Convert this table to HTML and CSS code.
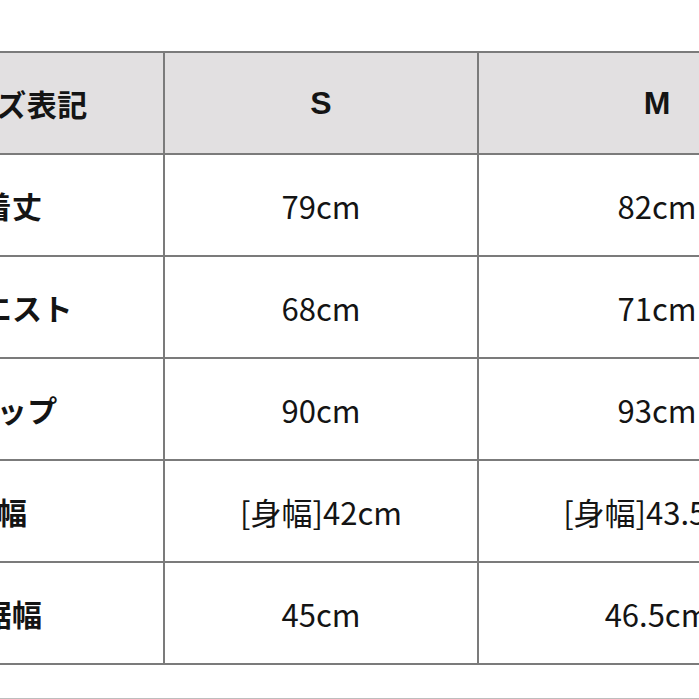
FILE: index.html
```html
<!DOCTYPE html>
<html lang="ja">
<head>
<meta charset="utf-8">
<link rel="stylesheet" href="styles.css">
</head>
<body>
<div class="page">
  <table class="size-table">
    <colgroup>
      <col class="col-label">
      <col class="col-s">
      <col class="col-m">
    </colgroup>
    <thead>
      <tr>
        <th class="label">サイズ表記</th>
        <th class="size">S</th>
        <th class="size">M</th>
      </tr>
    </thead>
    <tbody>
      <tr>
        <th class="label">着丈</th>
        <td>79cm</td>
        <td>82cm</td>
      </tr>
      <tr>
        <th class="label">ウエスト</th>
        <td>68cm</td>
        <td>71cm</td>
      </tr>
      <tr>
        <th class="label">ヒップ</th>
        <td>90cm</td>
        <td>93cm</td>
      </tr>
      <tr>
        <th class="label label-shift">身幅</th>
        <td>[身幅]42cm</td>
        <td>[身幅]43.5cm</td>
      </tr>
      <tr>
        <th class="label">裾幅</th>
        <td>45cm</td>
        <td>46.5cm</td>
      </tr>
    </tbody>
  </table>
  <div class="rule"></div>
</div>
</body>
</html>
```

FILE: styles.css
```css
html, body {
  margin: 0;
  padding: 0;
  background: #ffffff;
}

.page {
  width: 699px;
  height: 699px;
  overflow: hidden;
  background: #ffffff;
  padding-top: 51px;
  box-sizing: border-box;
}

.size-table {
  border-collapse: collapse;
  table-layout: fixed;
  width: 976px;
  margin-left: -141px;
  font-family: "Noto Sans CJK JP", "Noto Sans", sans-serif;
  color: #141414;
}

.col-label { width: 304px; }
.col-s { width: 314px; }
.col-m { width: 358px; }

.size-table th,
.size-table td {
  border: 2px solid #7b7b7b;
  height: 102px;
  padding: 0;
  text-align: center;
  vertical-align: middle;
  box-sizing: border-box;
}

.size-table thead th {
  background: #e2e0e1;
}

.size-table .label {
  font-weight: 700;
  font-size: 30px;
  letter-spacing: 0.5px;
}

.size-table .label-shift {
  padding-right: 30px;
}

.size-table .size {
  font-family: "Liberation Sans", Arial, sans-serif;
  font-weight: 700;
  font-size: 32px;
}

.size-table td {
  font-size: 31px;
  font-weight: 400;
}

.size-table tbody th {
  background: #ffffff;
}

.rule {
  margin-top: 33px;
  height: 1px;
  background: #bdbdbd;
}
```
